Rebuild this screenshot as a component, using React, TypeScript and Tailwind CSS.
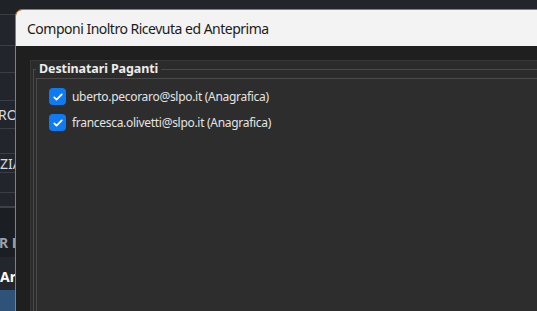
import React from "react";

const recipients = [
  "uberto.pecoraro@slpo.it (Anagrafica)",
  "francesca.olivetti@slpo.it (Anagrafica)",
];

function CheckBox() {
  return (
    <span className="flex h-[17px] w-[17px] items-center justify-center rounded-[4px] bg-[#0e7bf6]">
      <svg viewBox="0 0 16 16" className="h-[12px] w-[12px]" fill="none">
        <path d="M3 8.4l3.1 3.1L13 4.6" stroke="#fff" strokeWidth="2.3" strokeLinecap="round" strokeLinejoin="round" />
      </svg>
    </span>
  );
}

export default function App() {
  return (
    <div className="relative h-[311px] w-[537px] overflow-hidden bg-[#22262c] font-['Noto_Sans','Open_Sans',sans-serif]">
      {/* app behind the dialog */}
      <div className="flex w-[120px] flex-col text-[14px]">
        <div className="h-[15px] border-b border-[#3a3f47] bg-[#1f2328]" />
        <div className="h-[31px] border-b border-[#3a3f47]" />
        <div className="h-[27px] border-b border-[#3a3f47]" />
        <div className="h-[28px] border-b border-[#3a3f47]" />
        <div className="flex h-[28px] items-center border-b border-[#3a3f47] text-[#d7dbe0]">
          <span className="-ml-[2px] whitespace-nowrap">ROMA</span>
        </div>
        <div className="h-[25px] border-b border-[#3a3f47]" />
        <div className="flex h-[19px] items-center border-b border-[#3a3f47] text-[#d7dbe0]">
          <span className="whitespace-nowrap">ZIA</span>
        </div>
        <div className="h-[20px] border-b border-[#3a3f47]" />
        <div className="h-[15px] border-b-2 border-[#3d424a]" />
        <div className="flex h-[49px] items-end bg-[#1b1e23] pb-[4px] text-[14px] font-bold text-[#9aa1aa]">
          <span className="-ml-[1px] whitespace-nowrap">R F</span>
        </div>
        <div className="flex h-[33px] items-center bg-[#23272d] text-[14px] font-bold text-white">
          <span className="whitespace-nowrap pt-[6px]">Ar</span>
        </div>
        <div className="h-[30px] bg-[#2f5278]" />
      </div>

      {/* dialog window */}
      <div className="absolute bottom-[-10px] left-[15px] right-[-10px] top-[9px] flex flex-col rounded-tl-[7px] border border-[#b8761d] bg-[#1f1f1f]">
        <div className="flex h-[36px] items-center rounded-tl-[6px] bg-[#f3f3f3] pl-[11px] text-[14px] tracking-[-0.5px] text-[#1b1b1b]">
          Componi Inoltro Ricevuta ed Anteprima
        </div>
        <div className="flex flex-1 flex-col pl-[14px] pt-[14px]">
          <div className="flex flex-1 flex-col border-l border-t border-[#363636] bg-[#2b2b2b] pl-[1px]">
            <fieldset className="ml-[1px] flex flex-1 flex-col border-l border-t border-[#4a4a4a] pl-[2px]">
              <legend className="px-[3px] text-[12.5px] font-bold leading-[16px] tracking-[-0.1px] text-[#ececec]">
                Destinatari Paganti
              </legend>
              <div className="mt-[1px] flex-1 border-l border-t border-[#4a4a4a] bg-[#2d2d2d] pl-[12px] pt-[9px]">
                <div className="flex flex-col gap-[9px]">
                  {recipients.map((r) => (
                    <label key={r} className="flex h-[17px] items-center gap-[6px] text-[12px] tracking-[-0.3px] text-[#e4e4e4]">
                      <CheckBox />
                      <span>{r}</span>
                    </label>
                  ))}
                </div>
              </div>
            </fieldset>
          </div>
        </div>
      </div>
    </div>
  );
}
